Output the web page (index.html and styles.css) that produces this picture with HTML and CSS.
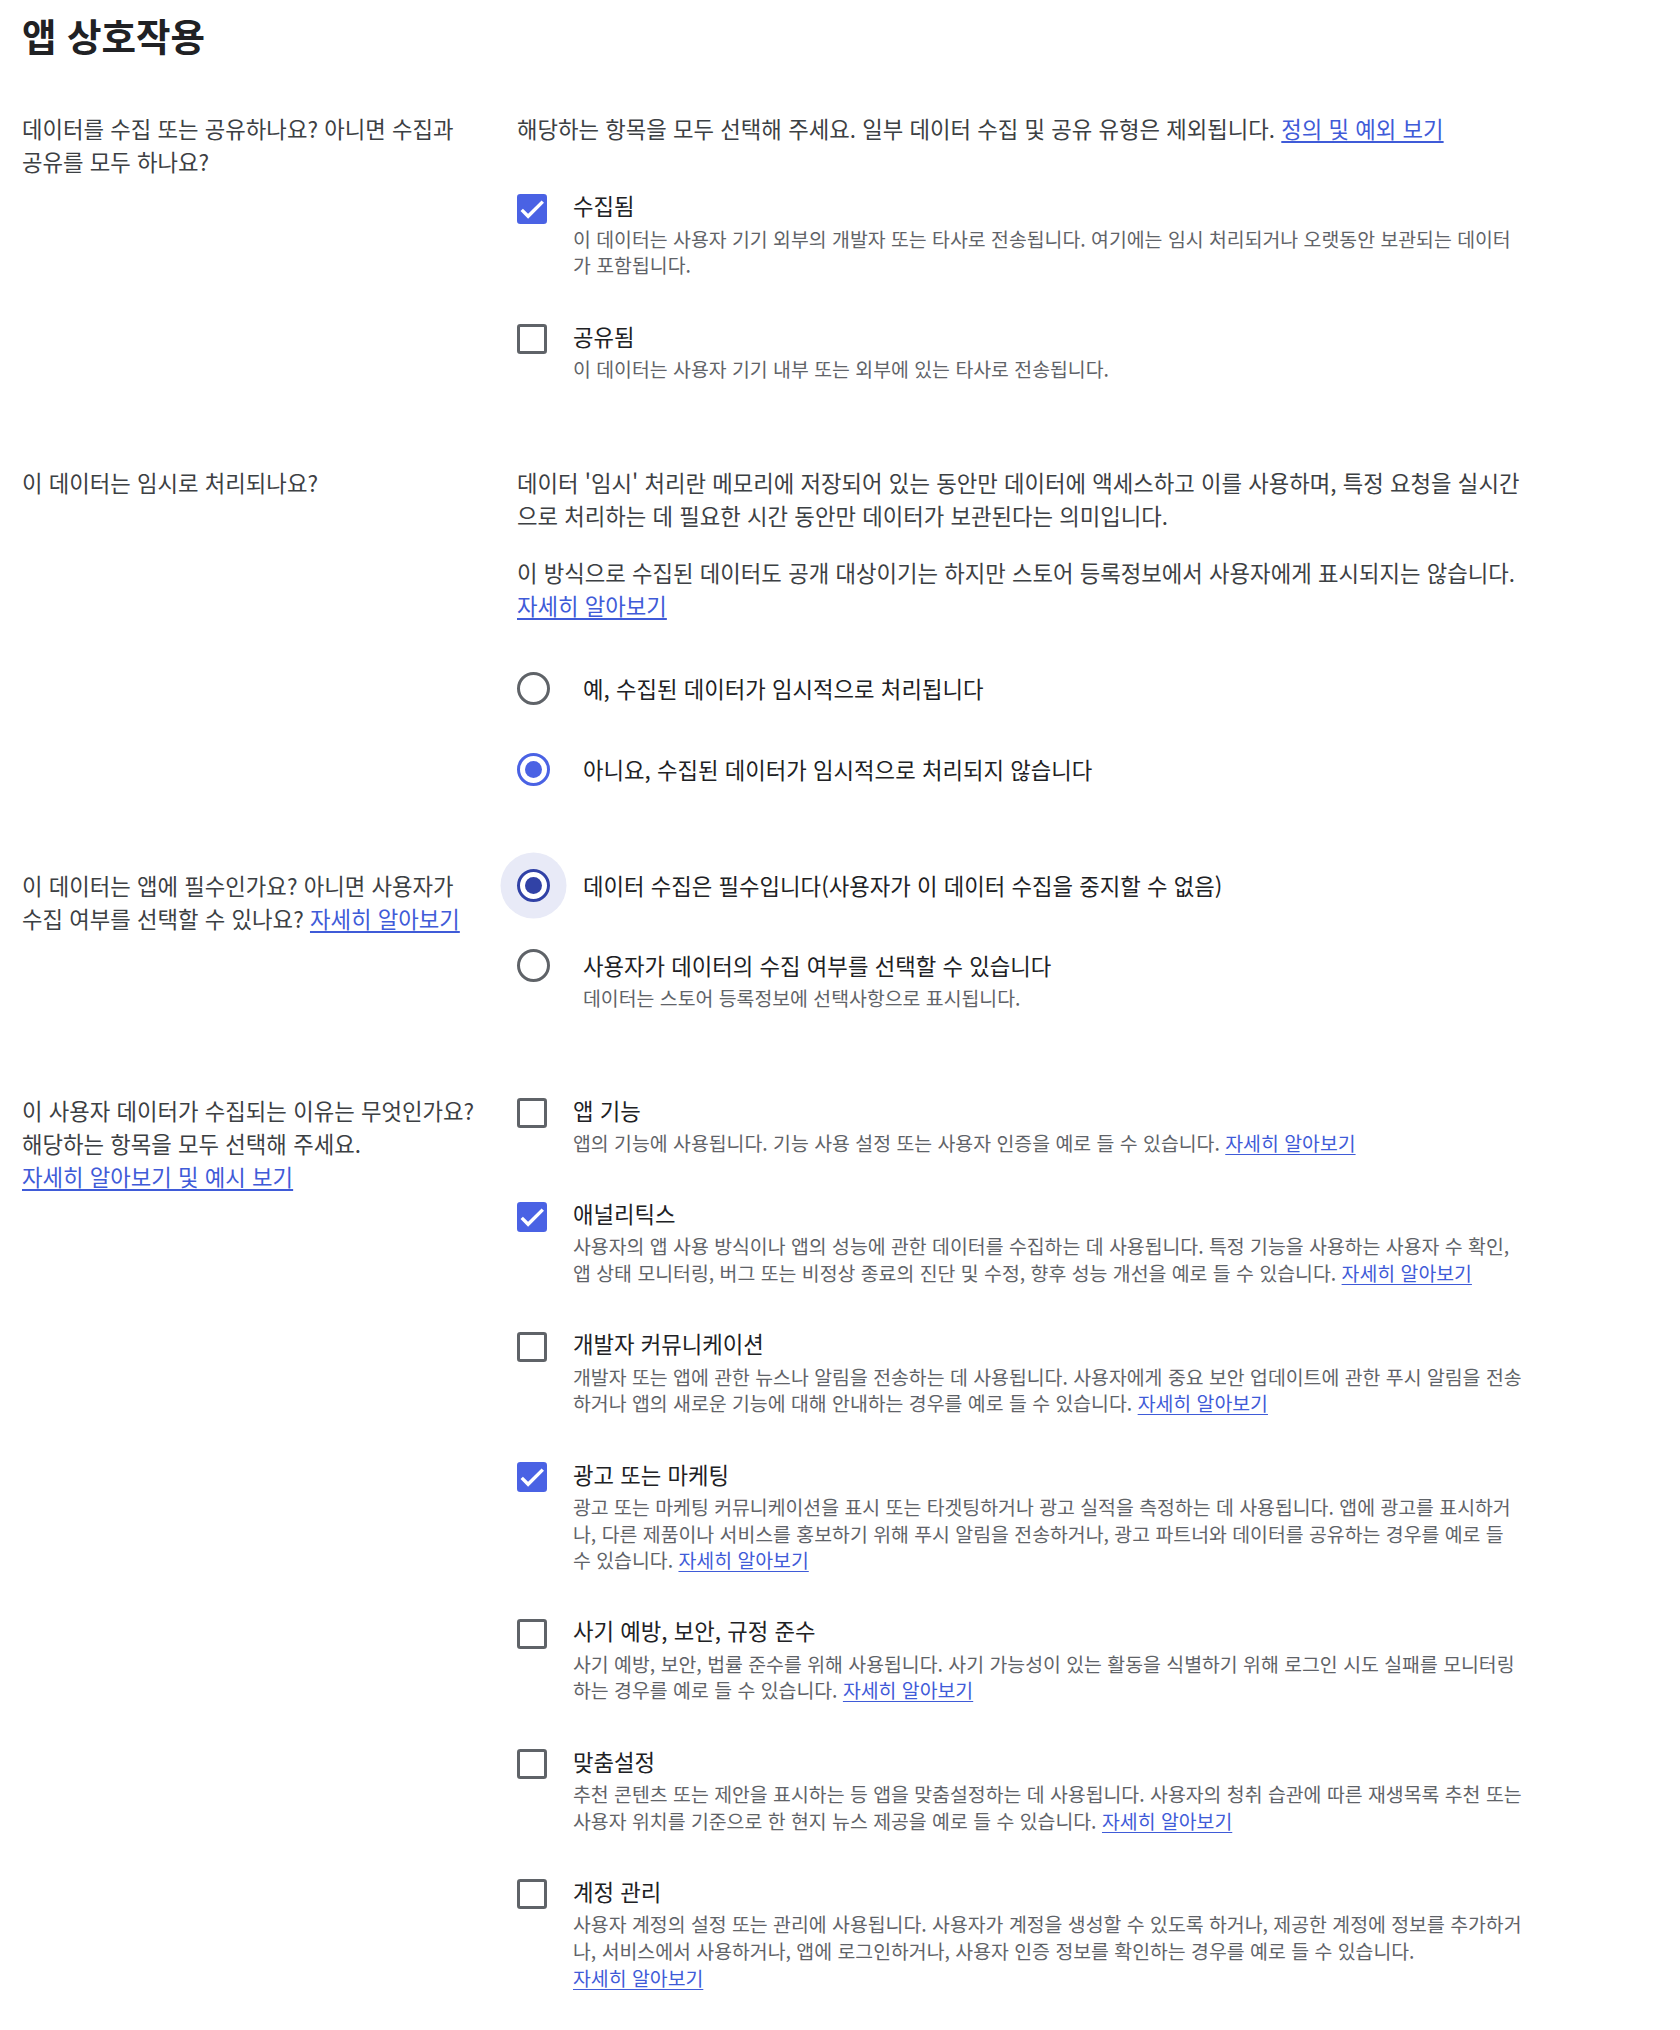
FILE: index.html
```html
<!DOCTYPE html>
<html lang="ko">
<head>
<meta charset="utf-8">
<title>앱 상호작용</title>
<link rel="stylesheet" href="styles.css">
</head>
<body>
<main class="page">
  <h1 class="title">앱 상호작용</h1>

  <section class="row row--first">
    <div class="question">데이터를 수집 또는 공유하나요? 아니면 수집과<br>공유를 모두 하나요?</div>
    <div class="answer">
      <p class="text">해당하는 항목을 모두 선택해 주세요. 일부 데이터 수집 및 공유 유형은 제외됩니다. <a class="link" href="#">정의 및 예외 보기</a></p>
      <div class="options options--spaced">
        <div class="option">
          <span class="checkbox checkbox--on"><svg viewBox="0 0 24 24"><path d="M1.73 12.91 8.1 19.28 22.79 4.59"/></svg></span>
          <div class="option-body">
            <div class="option-label">수집됨</div>
            <div class="option-desc">이 데이터는 사용자 기기 외부의 개발자 또는 타사로 전송됩니다. 여기에는 임시 처리되거나 오랫동안 보관되는 데이터<br>가 포함됩니다.</div>
          </div>
        </div>
        <div class="option">
          <span class="checkbox"></span>
          <div class="option-body">
            <div class="option-label">공유됨</div>
            <div class="option-desc">이 데이터는 사용자 기기 내부 또는 외부에 있는 타사로 전송됩니다.</div>
          </div>
        </div>
      </div>
    </div>
  </section>

  <section class="row row--temp">
    <div class="question">이 데이터는 임시로 처리되나요?</div>
    <div class="answer">
      <p class="text">데이터 '임시' 처리란 메모리에 저장되어 있는 동안만 데이터에 액세스하고 이를 사용하며, 특정 요청을 실시간<br>으로 처리하는 데 필요한 시간 동안만 데이터가 보관된다는 의미입니다.</p>
      <p class="text">이 방식으로 수집된 데이터도 공개 대상이기는 하지만 스토어 등록정보에서 사용자에게 표시되지는 않습니다.<br><a class="link" href="#">자세히 알아보기</a></p>
      <div class="radios radios--spaced">
        <div class="radio-option">
          <span class="radio"></span>
          <div class="option-body">
            <div class="option-label">예, 수집된 데이터가 임시적으로 처리됩니다</div>
          </div>
        </div>
        <div class="radio-option">
          <span class="radio radio--on"></span>
          <div class="option-body">
            <div class="option-label">아니요, 수집된 데이터가 임시적으로 처리되지 않습니다</div>
          </div>
        </div>
      </div>
    </div>
  </section>

  <section class="row row--required">
    <div class="question">이 데이터는 앱에 필수인가요? 아니면 사용자가<br>수집 여부를 선택할 수 있나요? <a class="link" href="#">자세히 알아보기</a></div>
    <div class="answer">
      <div class="radios radios--tight">
        <div class="radio-option">
          <span class="radio radio--on radio--focus"></span>
          <div class="option-body">
            <div class="option-label">데이터 수집은 필수입니다(사용자가 이 데이터 수집을 중지할 수 없음)</div>
          </div>
        </div>
        <div class="radio-option">
          <span class="radio"></span>
          <div class="option-body">
            <div class="option-label">사용자가 데이터의 수집 여부를 선택할 수 있습니다</div>
            <div class="option-desc">데이터는 스토어 등록정보에 선택사항으로 표시됩니다.</div>
          </div>
        </div>
      </div>
    </div>
  </section>

  <section class="row">
    <div class="question">
      <div>이 사용자 데이터가 수집되는 이유는 무엇인가요?<br>해당하는 항목을 모두 선택해 주세요.</div>
      <div><a class="link" href="#">자세히 알아보기 및 예시 보기</a></div>
    </div>
    <div class="answer">
      <div class="options">
        <div class="option">
          <span class="checkbox"></span>
          <div class="option-body">
            <div class="option-label">앱 기능</div>
            <div class="option-desc">앱의 기능에 사용됩니다. 기능 사용 설정 또는 사용자 인증을 예로 들 수 있습니다. <a class="link" href="#">자세히 알아보기</a></div>
          </div>
        </div>
        <div class="option">
          <span class="checkbox checkbox--on"><svg viewBox="0 0 24 24"><path d="M1.73 12.91 8.1 19.28 22.79 4.59"/></svg></span>
          <div class="option-body">
            <div class="option-label">애널리틱스</div>
            <div class="option-desc">사용자의 앱 사용 방식이나 앱의 성능에 관한 데이터를 수집하는 데 사용됩니다. 특정 기능을 사용하는 사용자 수 확인,<br>앱 상태 모니터링, 버그 또는 비정상 종료의 진단 및 수정, 향후 성능 개선을 예로 들 수 있습니다. <a class="link" href="#">자세히 알아보기</a></div>
          </div>
        </div>
        <div class="option">
          <span class="checkbox"></span>
          <div class="option-body">
            <div class="option-label">개발자 커뮤니케이션</div>
            <div class="option-desc">개발자 또는 앱에 관한 뉴스나 알림을 전송하는 데 사용됩니다. 사용자에게 중요 보안 업데이트에 관한 푸시 알림을 전송<br>하거나 앱의 새로운 기능에 대해 안내하는 경우를 예로 들 수 있습니다. <a class="link" href="#">자세히 알아보기</a></div>
          </div>
        </div>
        <div class="option">
          <span class="checkbox checkbox--on"><svg viewBox="0 0 24 24"><path d="M1.73 12.91 8.1 19.28 22.79 4.59"/></svg></span>
          <div class="option-body">
            <div class="option-label">광고 또는 마케팅</div>
            <div class="option-desc">광고 또는 마케팅 커뮤니케이션을 표시 또는 타겟팅하거나 광고 실적을 측정하는 데 사용됩니다. 앱에 광고를 표시하거<br>나, 다른 제품이나 서비스를 홍보하기 위해 푸시 알림을 전송하거나, 광고 파트너와 데이터를 공유하는 경우를 예로 들<br>수 있습니다. <a class="link" href="#">자세히 알아보기</a></div>
          </div>
        </div>
        <div class="option">
          <span class="checkbox"></span>
          <div class="option-body">
            <div class="option-label">사기 예방, 보안, 규정 준수</div>
            <div class="option-desc">사기 예방, 보안, 법률 준수를 위해 사용됩니다. 사기 가능성이 있는 활동을 식별하기 위해 로그인 시도 실패를 모니터링<br>하는 경우를 예로 들 수 있습니다. <a class="link" href="#">자세히 알아보기</a></div>
          </div>
        </div>
        <div class="option">
          <span class="checkbox"></span>
          <div class="option-body">
            <div class="option-label">맞춤설정</div>
            <div class="option-desc">추천 콘텐츠 또는 제안을 표시하는 등 앱을 맞춤설정하는 데 사용됩니다. 사용자의 청취 습관에 따른 재생목록 추천 또는<br>사용자 위치를 기준으로 한 현지 뉴스 제공을 예로 들 수 있습니다. <a class="link" href="#">자세히 알아보기</a></div>
          </div>
        </div>
        <div class="option">
          <span class="checkbox"></span>
          <div class="option-body">
            <div class="option-label">계정 관리</div>
            <div class="option-desc">사용자 계정의 설정 또는 관리에 사용됩니다. 사용자가 계정을 생성할 수 있도록 하거나, 제공한 계정에 정보를 추가하거<br>나, 서비스에서 사용하거나, 앱에 로그인하거나, 사용자 인증 정보를 확인하는 경우를 예로 들 수 있습니다.<br><a class="link" href="#">자세히 알아보기</a></div>
          </div>
        </div>
      </div>
    </div>
  </section>
</main>
</body>
</html>
```

FILE: styles.css
```css
html {
  background: #ffffff;
}

body {
  margin: 0;
  padding: 0;
  font-family: "Noto Sans CJK KR", "Noto Sans", sans-serif;
  font-size: 22.3px;
  line-height: 33.3px;
  color: #3c4043;
}

.page {
  padding: 0 22px;
}

.title {
  margin: 15px 0 57px;
  font-size: 37.5px;
  line-height: 40px;
  font-weight: 700;
  color: #202124;
}

.row {
  display: flex;
  align-items: flex-start;
  margin-bottom: 84px;
}

.row--first {
  margin-bottom: 83px;
}

.row--temp {
  margin-bottom: 82.3px;
}

.row--required {
  margin-bottom: 81.5px;
}

.question {
  flex: none;
  width: 475px;
  margin-right: 20px;
}

.answer {
  flex: none;
  width: 1040px;
}

.text {
  margin: 0;
}

.text + .text {
  margin-top: 23.6px;
}

.link {
  color: #3f5bd8;
  text-decoration: underline;
  text-underline-offset: 3px;
  white-space: nowrap;
}

.options {
  display: flex;
  flex-direction: column;
  gap: 40.5px;
}

.options--spaced {
  margin-top: 44px;
}

.option {
  display: flex;
  align-items: flex-start;
  gap: 26px;
}

.checkbox {
  position: relative;
  flex: none;
  box-sizing: border-box;
  width: 30px;
  height: 30px;
  margin-top: 4.5px;
  border: 3.3px solid #5f6368;
  border-radius: 3.3px;
}

.checkbox--on {
  background: #4a62e4;
  border-color: #4a62e4;
}

.checkbox svg {
  position: absolute;
  inset: 0;
  width: 100%;
  height: 100%;
  fill: none;
  stroke: #ffffff;
  stroke-width: 3.4;
}

.option-body {
  flex: 1;
  min-width: 0;
}

.option-label {
  font-size: 22.3px;
  line-height: 33.3px;
  color: #202124;
}

.option-desc {
  margin-top: 3px;
  font-size: 19.4px;
  line-height: 26.7px;
  color: #5f6368;
}

.radios {
  display: flex;
  flex-direction: column;
  gap: 48px;
}

.radios--spaced {
  margin-top: 49.7px;
}

.radios--tight {
  gap: 47px;
}

.radio-option {
  display: flex;
  align-items: flex-start;
  gap: 33px;
}

.radio {
  position: relative;
  flex: none;
  box-sizing: border-box;
  width: 33px;
  height: 33px;
  border: 3.3px solid #5f6368;
  border-radius: 50%;
}

.radio--on {
  border-color: #4a62e4;
}

.radio--on::after {
  content: "";
  position: absolute;
  inset: 4.9px;
  border-radius: 50%;
  background: #4a62e4;
}

.radio--focus {
  border-color: #3142a6;
  box-shadow: 0 0 0 16.5px #e8eaf7;
}

.radio--focus::after {
  background: #3142a6;
}
```
